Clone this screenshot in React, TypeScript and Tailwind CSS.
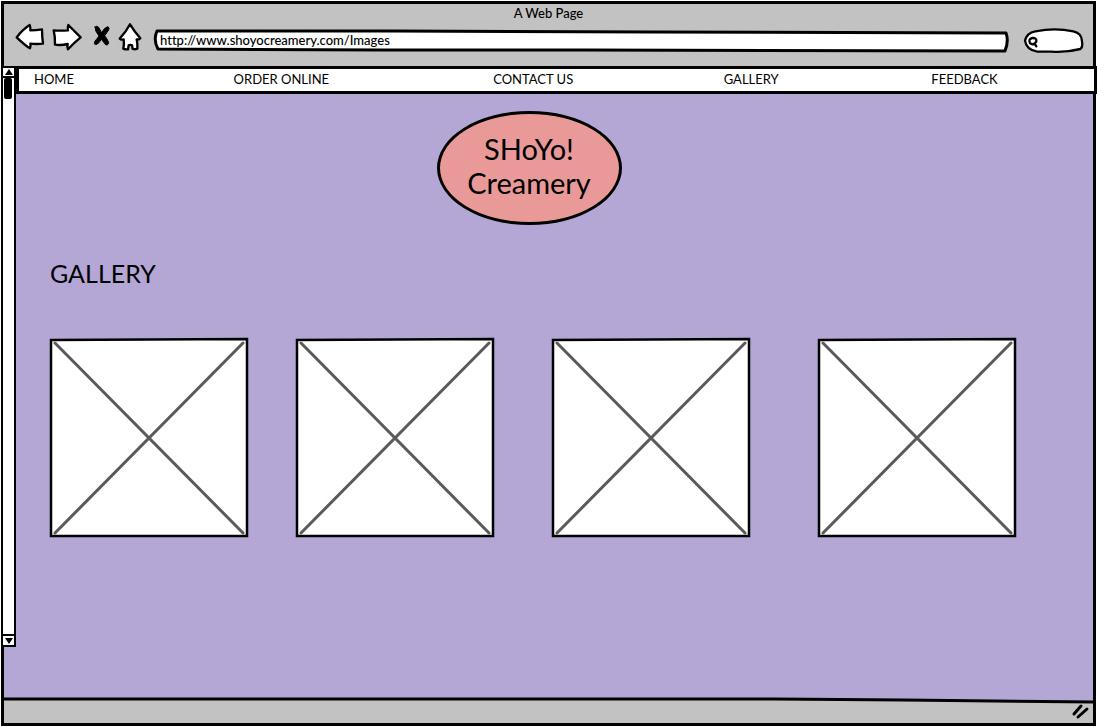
import React from "react";

const links = ["HOME", "ORDER ONLINE", "CONTACT US", "GALLERY", "FEEDBACK"];
const photos = ["Photo 1", "Photo 2", "Photo 3", "Photo 4"];

function Toolbar() {
  const ink = {
    fill: "#fff",
    stroke: "#000",
    strokeWidth: 7,
    strokeLinejoin: "round" as const,
    strokeLinecap: "round" as const,
  };
  return (
    <div className="flex h-7 items-center gap-2">
      <button type="button" aria-label="Back">
        <svg className="block h-7 w-[29px] overflow-visible" viewBox="45 69 87 84" {...ink}>
          <path d="M50 112Q68 88 89 75Q92 82 91 91Q108 91 126 88Q126 110 129 131Q110 133 91 131Q93 139 90 145Q76 137 50 112Z" />
        </svg>
      </button>
      <button type="button" aria-label="Forward">
        <svg className="block h-7 w-[30px] overflow-visible" viewBox="156 69 90 84" {...ink}>
          <path d="M161 91Q182 93 204 91Q202 82 205 75Q222 92 242 112Q222 128 204 148Q201 140 203 132Q184 137 165 134Q166 112 161 91Z" />
        </svg>
      </button>
      <button type="button" aria-label="Stop">
        <svg className="block h-7 w-5 overflow-visible" viewBox="270 69 60 84" {...ink}>
          <path d="M285 81Q289 76 296 82L305 98Q313 82 323 80Q330 82 326 90L314 107Q321 116 326 127Q325 137 317 134L304 118Q297 131 288 134Q280 133 284 125L297 108Q284 92 285 81Z" fill="#000" strokeWidth={3} />
        </svg>
      </button>
      <button type="button" aria-label="Home">
        <svg className="block h-7 w-6 overflow-visible" viewBox="354 69 72 84" {...ink}>
          <path d="M390 73Q403 94 421 115Q417 120 410 118Q413 132 412 146Q405 149 398 147L396 136Q391 133 386 136L384 148Q376 149 370 146Q373 132 371 118Q363 120 359 116Q378 96 390 73Z" />
        </svg>
      </button>
    </div>
  );
}

function AddressBar() {
  return (
    <div className="relative h-[22px] min-w-0 flex-1">
      <svg
        className="absolute inset-0 h-full w-full overflow-visible"
        viewBox="0 0 854 22"
        preserveAspectRatio="none"
        fill="#fff"
        stroke="#000"
        strokeWidth={3}
        strokeLinejoin="round"
        aria-hidden="true"
      >
        <path vectorEffect="non-scaling-stroke" d="M3 1L240 1L500 2L853 3Q856 11 852 21L430 20L230 20L4 19Q-1 10 3 1Z" />
      </svg>
      <input
        aria-label="Address"
        defaultValue="http://www.shoyocreamery.com/Images"
        className="relative block h-5 w-full bg-transparent px-1.5 text-[13px] font-medium outline-none [font-variant-ligatures:none]"
      />
    </div>
  );
}

function SearchBox() {
  return (
    <div className="relative h-[27px] w-[60px]">
      <svg className="absolute inset-0 h-full w-full overflow-visible" viewBox="369 81 180 81" fill="#fff" stroke="#000" strokeWidth={7} strokeLinecap="round" aria-hidden="true">
        <path d="M375 122Q380 99 406 94Q465 82 520 94Q546 100 546 124Q549 141 541 147Q500 158 454 155L412 155Q379 150 375 122Z" />
        <path d="M397 114Q411 113 409 125Q401 137 390 130Q384 117 397 114M404 131L409 139" />
      </svg>
      <input type="search" aria-label="Search" className="relative block h-full w-full bg-transparent pr-2 pl-5 text-[13px] outline-none" />
    </div>
  );
}

function ScrollBar() {
  return (
    <div className="relative -ml-[3px] mb-[51px] flex w-[15px] shrink-0 flex-col border-2 border-black bg-white">
      <button type="button" aria-label="Scroll up" className="flex h-[10px] items-center justify-center border-b-2 border-black">
        <svg className="block h-1.5 w-2" viewBox="0 0 8 6"><path d="M4 0L8 6H0Z" /></svg>
      </button>
      <div className="ml-px h-[21px] w-2 rounded-xs bg-black" />
      <div className="flex-1" />
      <button type="button" aria-label="Scroll down" className="flex h-[11px] items-center justify-center border-t-2 border-black">
        <svg className="block h-1.5 w-2" viewBox="0 0 8 6"><path d="M0 0H8L4 6Z" /></svg>
      </button>
    </div>
  );
}

function Placeholder({ label }: { label: string }) {
  return (
    <svg role="img" aria-label={label} className="block aspect-square w-[198px] max-w-full overflow-visible" viewBox="0 0 198 198">
      <path d="M1 2L197 1L197 198L12 198L1 198Z" fill="#fff" stroke="#000" strokeWidth={2.5} />
      <path d="M5 5L193 195M193 5L5 195" stroke="#5a5a5a" strokeWidth={3} strokeLinecap="round" />
    </svg>
  );
}

export default function App() {
  return (
    <div className="flex min-h-screen flex-col bg-white p-px font-[Lato,'Open_Sans',sans-serif] text-black">
      <div className="flex flex-1 flex-col border-3 border-black bg-[#b4a7d6]">
        <header className="h-[62px] bg-[#c2c2c2]">
          <h1 className="text-center text-[13px] leading-[19px] font-medium">A Web Page</h1>
          <div className="flex items-start pr-[10px] pl-[11px]">
            <Toolbar />
            <div className="ml-3 flex flex-1 items-center gap-4 pt-1">
              <AddressBar />
              <SearchBox />
            </div>
          </div>
        </header>

        <div className="flex flex-1">
          <ScrollBar />
          <main className="min-w-0 flex-1">
            <nav className="relative -mr-1 grid h-7 grid-cols-[200fr_260fr_231fr_208fr_163fr] items-center border-3 border-black bg-white pl-[15px] text-[13px] leading-5">
              {links.map((link) => (
                <a key={link} href="#" className="pb-2">{link}</a>
              ))}
            </nav>

            <div className="flex justify-center pt-[17px] pr-[51px]">
              <div className="flex h-[114px] w-[185px] flex-col items-center justify-center rounded-[50%] border-3 border-black bg-[#ea9999] pb-1 text-center text-[29px] leading-[34px]">
                <span>SHoYo!</span>
                <span>Creamery</span>
              </div>
            </div>

            <section className="pt-8 pb-10 pl-[34px]">
              <h2 className="text-[25px] leading-8">GALLERY</h2>
              <div className="mt-[49px] grid grid-cols-[246fr_256fr_266fr_275fr]">
                {photos.map((photo) => (
                  <Placeholder key={photo} label={photo} />
                ))}
              </div>
            </section>
          </main>
        </div>

        <footer className="relative h-[25px] bg-[#c2c2c2]">
          <svg className="block h-1.5 w-full overflow-visible" viewBox="0 0 1089 6" preserveAspectRatio="none" aria-hidden="true">
            <path d="M0 0L780 0L1089 4V-2H0Z" fill="#b4a7d6" />
            <path d="M0 1L770 1L900 2L1089 4" fill="none" stroke="#000" strokeWidth={3} vectorEffect="non-scaling-stroke" />
          </svg>
          <svg className="absolute right-1 bottom-1 h-3.5 w-4 overflow-visible" viewBox="0 0 16 14" fill="none" stroke="#000" strokeWidth={3} strokeLinecap="round" aria-hidden="true">
            <path d="M1 9L8 1M5 12L14 4" />
          </svg>
        </footer>
      </div>
    </div>
  );
}
